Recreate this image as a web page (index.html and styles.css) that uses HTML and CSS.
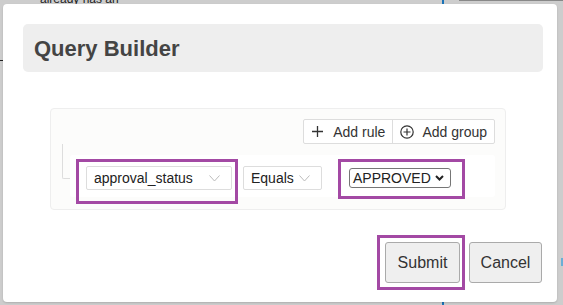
FILE: index.html
```html
<!DOCTYPE html>
<html lang="en">
<head>
    <meta charset="UTF-8">
    <title>Query Builder</title>
    <link rel="stylesheet" href="styles.css">
</head>
<body>

<!-- page behind the overlay -->
<div class="backdrop">
    <span class="bg-text">already has an</span>
    <span class="bg-blue bg-blue-top"></span>
    <span class="bg-blue bg-blue-bottom"></span>
    <span class="bg-blue-right"></span>
    <span class="bg-rule"></span>
    <span class="bg-tick"></span>
</div>

<div class="modal">
    <div class="modal-header">
        <h1>Query Builder</h1>
    </div>

    <div class="group">
        <div class="group-header">
            <div class="btn-group">
                <button class="btn-add">
                    <svg width="11" height="11" viewBox="0 0 11 11"><path d="M5.5 0v11M0 5.5h11" stroke="#333" stroke-width="1.3" fill="none"/></svg>
                    Add rule
                </button>
                <button class="btn-add btn-group-add">
                    <svg width="14" height="14" viewBox="0 0 14 14"><circle cx="7" cy="7" r="6.2" stroke="#333" stroke-width="1.2" fill="none"/><path d="M7 3.5v7M3.5 7h7" stroke="#333" stroke-width="1.2"/></svg>
                    Add group
                </button>
            </div>
        </div>

        <div class="rules-list">
            <div class="connector"></div>
            <div class="rule">
                <div class="mark mark-field">
                    <div class="pick pick-field">approval_status
                        <svg class="chev" width="11" height="7" viewBox="0 0 11 7"><path d="M0.5 0.5l5 5.5 5-5.5" stroke="#bbb" fill="none"/></svg>
                    </div>
                </div>
                <div class="pick pick-op">Equals
                    <svg class="chev" width="11" height="7" viewBox="0 0 11 7"><path d="M0.5 0.5l5 5.5 5-5.5" stroke="#bbb" fill="none"/></svg>
                </div>
                <div class="mark mark-value">
                    <div class="native-select">APPROVED
                        <svg width="9" height="6" viewBox="0 0 9 6"><path d="M1 1l3.5 3.5L8 1" stroke="#222" stroke-width="2" fill="none"/></svg>
                    </div>
                </div>
            </div>
        </div>
    </div>

    <div class="modal-footer">
        <div class="mark mark-submit">
            <button class="btn">Submit</button>
        </div>
        <button class="btn btn-cancel">Cancel</button>
    </div>
</div>

</body>
</html>
```

FILE: styles.css
```css
body {
    margin: 0;
    padding: 4px 6px 3px 3px;
    background-color: #cdcdcd;
    font-family: "Liberation Sans", Arial, sans-serif;
    color: #222;
    overflow: hidden;
}
.backdrop span {
    position: absolute;
}
.bg-text {
    left: 40px;
    top: -8px;
    font-size: 12px;
    line-height: 14px;
    color: #222;
}
.bg-blue {
    left: 442px;
    width: 2px;
    background-color: #1a73b8;
}
.bg-blue-top { top: 0; height: 4px; }
.bg-blue-bottom { top: 302px; height: 3px; }
.bg-blue-right {
    left: 561px;
    top: 258px;
    width: 2px;
    height: 8px;
    background-color: #6aaed6;
}
.bg-rule {
    left: 459px;
    top: 0;
    width: 104px;
    height: 1px;
    background-color: #888;
}
.bg-tick {
    left: 0;
    top: 60px;
    width: 3px;
    height: 1px;
    background-color: #222;
}
.modal {
    position: relative;
    width: 554px;
    height: 298px;
    box-sizing: border-box;
    padding: 20px 14px 0 20px;
    background-color: #fff;
    border-radius: 4px;
    box-shadow: 0 1px 2px rgba(0,0,0,0.15);
}
.modal-header {
    height: 48px;
    background-color: #eee;
    border-radius: 5px;
    padding-left: 11px;
}
.modal-header h1 {
    margin: 0;
    font-size: 22px;
    line-height: 49px;
    color: #444;
}
.group {
    margin: 36px 0 0 27px;
    width: 456px;
    height: 102px;
    box-sizing: border-box;
    padding: 10px 10px 0 10px;
    background-color: #fcfcfb;
    border: 1px solid #eee;
    border-radius: 4px;
}
.group-header {
    display: flex;
    justify-content: flex-end;
}
.btn-group {
    display: flex;
    height: 23px;
    border: 1px solid #ddd;
    border-radius: 2px;
    background-color: #fff;
}
.btn-add {
    display: flex;
    align-items: center;
    gap: 10px;
    padding: 0 7px 0 8px;
    border: none;
    background: none;
    font-family: inherit;
    font-size: 14px;
    color: #333;
}
.btn-group-add {
    gap: 8px;
    padding: 0 7px 0 7px;
    border-left: 1px solid #ddd;
}
.rules-list {
    display: flex;
    align-items: flex-start;
}
.connector {
    width: 7px;
    height: 34px;
    margin-left: 1px;
    border-left: 1px solid #ddd;
    border-bottom: 1px solid #ddd;
    border-bottom-left-radius: 2px;
}
.rule {
    display: flex;
    align-items: flex-start;
    flex: 1;
    height: 42px;
    margin-top: 11px;
    padding: 4px 0 0 6px;
    box-sizing: border-box;
    background-color: #fff;
    border-radius: 3px;
}
.mark {
    border: 3px solid #a349a4;
    box-sizing: border-box;
}
.mark-field {
    width: 162px;
    height: 45px;
    padding: 4px 3px 0 7px;
}
.pick {
    display: flex;
    align-items: center;
    justify-content: space-between;
    height: 24px;
    box-sizing: border-box;
    padding: 0 11px 0 7px;
    border: 1px solid #ddd;
    border-radius: 2px;
    background-color: #fff;
    font-size: 14px;
    color: #222;
}
.pick-field {
    width: 146px;
}
.pick-op {
    width: 79px;
    margin: 7px 0 0 5px;
}
.mark-value {
    width: 127px;
    height: 40px;
    margin-left: 16px;
    padding: 6px 0 0 8px;
}
.native-select {
    display: flex;
    align-items: center;
    justify-content: space-between;
    width: 102px;
    height: 20px;
    box-sizing: border-box;
    padding: 0 6px 0 3px;
    border: 1px solid #767676;
    border-radius: 3px;
    background-color: #fff;
    font-size: 14px;
    color: #222;
}
.modal-footer {
    display: flex;
    justify-content: flex-end;
    align-items: flex-start;
    margin: 25px 1px 0 0;
}
.mark-submit {
    width: 88px;
    height: 55px;
    padding: 4px 0 0 5px;
    margin-right: 4px;
}
.btn {
    width: 75px;
    height: 41px;
    border: 1px solid #aaa;
    border-radius: 3px;
    background-color: #efefef;
    font-family: inherit;
    font-size: 16px;
    color: #333;
}
.btn-cancel {
    width: 73px;
    margin-top: 7px;
}
```
